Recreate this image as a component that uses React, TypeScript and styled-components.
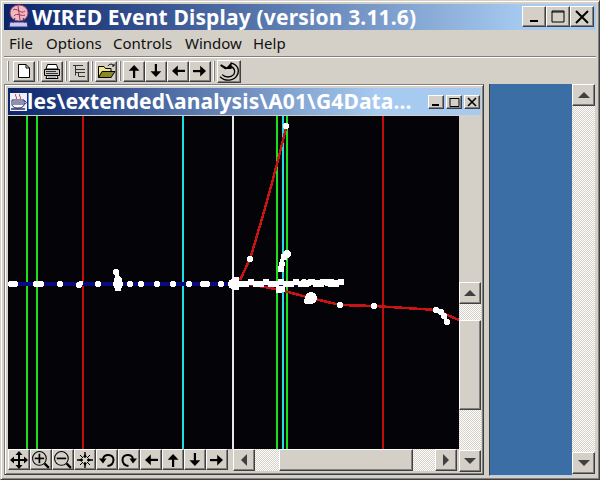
import React from "react";
import styled, { createGlobalStyle, css } from "styled-components";

const Global = createGlobalStyle`
  html, body { margin: 0; padding: 0; background: #d4d0c8; }
  #root { width: 600px; height: 480px; overflow: hidden; }
`;

const FACE = "#d4d0c8";
const bevel = css`
  background: ${FACE};
  box-sizing: border-box;
  border-style: solid;
  border-width: 1px;
  border-color: #fff #404040 #404040 #fff;
  box-shadow: inset -1px -1px 0 #808080;
`;
const hatch = css`
  background: repeating-conic-gradient(#d4d0c8 0 25%, #ffffff 0 50%) 0 0 / 2px 2px;
`;

const Window = styled.div`
  width: 600px;
  height: 480px;
  box-sizing: border-box;
  padding: 3px;
  background: ${FACE};
  border: 1px solid;
  border-color: #d4d0c8 #404040 #404040 #d4d0c8;
  box-shadow: inset 1px 1px 0 #fff, inset -1px -1px 0 #808080;
  display: flex;
  flex-direction: column;
  font-family: "Noto Sans", sans-serif;
`;
const TitleBar = styled.div<{ $small?: boolean }>`
  display: flex;
  align-items: center;
  flex: none;
  height: ${(p) => (p.$small ? 27 : 26)}px;
  background: linear-gradient(90deg, #0a246a 0%, #a6caf0 ${(p) => (p.$small ? 78 : 88)}%, #a6caf0 100%);
  padding: 0 ${(p) => (p.$small ? 1 : 2)}px 0 ${(p) => (p.$small ? 2 : 3)}px;
  svg { flex: none; }
`;
const TitleText = styled.div<{ $small?: boolean }>`
  flex: 1;
  min-width: 0;
  color: #fff;
  font-family: "Noto Sans", sans-serif;
  font-weight: 700;
  white-space: nowrap;
  font-size: 21px;
  letter-spacing: ${(p) => (p.$small ? 0.12 : 0.17)}px;
  margin-left: ${(p) => (p.$small ? 0 : 1)}px;
  line-height: 1;
`;
const CapButtons = styled.div<{ $small?: boolean }>`
  display: flex;
  gap: ${(p) => (p.$small ? 2 : 0)}px;
  margin-top: ${(p) => (p.$small ? 0 : -1)}px;
`;
const CapButton = styled.div<{ $small?: boolean }>`
  ${bevel};
  width: ${(p) => (p.$small ? 16 : 24)}px;
  height: ${(p) => (p.$small ? 14 : 21)}px;
  display: flex;
  align-items: center;
  justify-content: center;
  svg { display: block; }
`;
const MenuBar = styled.div`
  display: flex;
  align-items: center;
  flex: none;
  height: 26px;
  font-size: 15px;
  color: #111;
  border-bottom: 1px solid #808080;
  box-shadow: 0 1px 0 #fff;
`;
const MenuItem = styled.div<{ $w: number }>`
  width: ${(p) => p.$w}px;
  padding-left: 5px;
  box-sizing: border-box;
  white-space: nowrap;
`;
const ToolBar = styled.div`
  display: flex;
  align-items: center;
  flex: none;
  height: 26px;
  padding-left: 1px;
  margin-top: 1px;
`;
const Grip = styled.div`
  width: 0;
  height: 20px;
  border-left: 1px solid #fff;
  border-right: 1px solid #808080;
  margin: 0 2px;
  flex: none;
  &:first-child { margin-right: 4px; }
`;
const ToolButton = styled.div<{ $w?: number; $h?: number }>`
  ${bevel};
  width: ${(p) => p.$w ?? 22}px;
  height: ${(p) => p.$h ?? 21}px;
  flex: none;
  display: flex;
  align-items: center;
  justify-content: center;
  svg { display: block; flex: none; }
`;
const Desktop = styled.div`
  flex: 1;
  min-height: 0;
  display: flex;
  padding-right: 1px;
`;
const Frame = styled.div`
  ${bevel};
  width: 480px;
  flex: none;
  padding: 3px 2px 2px 3px;
  margin: 0 4px 1px 0;
  display: flex;
  flex-direction: column;
  border-top-color: #808080;
  border-left-color: #808080;
  box-shadow: inset 1px 1px 0 #fff, inset -1px -1px 0 #808080;
`;
const FrameBody = styled.div`
  flex: 1;
  min-height: 0;
  display: flex;
  margin-top: 1px;
`;
const ViewColumn = styled.div`
  width: 451px;
  flex: none;
  display: flex;
  flex-direction: column;
`;
const Canvas = styled.svg`
  display: block;
  width: 451px;
  height: 333px;
  flex: none;
  background: #030308;
`;
const BottomRow = styled.div`
  display: flex;
  flex: 1;
`;
const ButtonStrip = styled.div`
  display: flex;
  width: 225px;
  flex: none;
`;
const HScroll = styled.div`
  display: flex;
  width: 224px;
  height: 22px;
`;
const VScroll = styled.div<{ $top?: number; $bottom?: number; $w?: number }>`
  width: ${(p) => p.$w ?? 22}px;
  flex: none;
  display: flex;
  flex-direction: column;
  padding-top: ${(p) => p.$top ?? 0}px;
  padding-bottom: ${(p) => p.$bottom ?? 0}px;
`;
const ScrollButton = styled.div<{ $h?: number; $w?: number }>`
  ${bevel};
  width: ${(p) => p.$w ?? 22}px;
  height: ${(p) => p.$h ?? 22}px;
  flex: none;
  display: flex;
  align-items: center;
  justify-content: center;
  svg { display: block; }
`;
const Track = styled.div<{ $size?: number }>`
  ${hatch};
  flex: ${(p) => (p.$size ? `0 0 ${p.$size}px` : 1)};
`;
const Thumb = styled.div<{ $size: number }>`
  ${bevel};
  flex: 0 0 ${(p) => p.$size}px;
`;
const Blue = styled.div`
  flex: 1;
  background: #3a6ea5;
  margin-left: 1px;
  border-left: 1px solid #404040;
  border-bottom: 1px solid #b9cde4;
`;

const Tri = ({ d }: { d: "up" | "down" | "left" | "right" }) => {
  const pts = {
    up: "6,1 12,7 0,7",
    down: "0,1 12,1 6,7",
    left: "8,0 8,12 2,6",
    right: "2,0 2,12 8,6",
  }[d];
  const sq = d === "up" || d === "down";
  return (
    <svg width={sq ? 12 : 10} height={sq ? 8 : 12}>
      <polygon points={pts} fill="#404040" />
    </svg>
  );
};

const Arrow = ({ d }: { d: "up" | "down" | "left" | "right" }) => {
  const rot = { up: 0, right: 90, down: 180, left: 270 }[d];
  return (
    <svg width="14" height="14" viewBox="0 0 14 14">
      <g transform={`rotate(${rot} 7 7)`} fill="#000">
        <rect x="6" y="3" width="2.2" height="11" />
        <polygon points="7.1,1 12.5,6.8 1.7,6.8" />
      </g>
    </svg>
  );
};

const Stroke = { fill: "none", stroke: "#000", strokeWidth: 1 } as const;

const NewIcon = () => (
  <svg width="14" height="16" viewBox="0 0 14 16">
    <path d="M1.5 1.5H9L12.5 5V14.5H1.5Z" fill="#fff" stroke="#000" />
    <path d="M9 1.5V5H12.5" {...Stroke} />
  </svg>
);
const PrintIcon = () => (
  <svg width="18" height="17" viewBox="0 0 18 17">
    <path d="M4.5 1.5H13.5L15 6H3Z" fill="#fff" stroke="#000" />
    <path d="M1.5 6.5H16.5V12.5H1.5Z" fill="#c8c8c8" stroke="#000" />
    <path d="M3 8.5H13M3 10.5H15" stroke="#333" />
    <path d="M4 12.5H14L15 15.5H3Z" fill="#fff" stroke="#000" />
    <path d="M5 14H13" stroke="#666" />
  </svg>
);
const TreeIcon = () => (
  <svg width="15" height="16" viewBox="0 0 15 16">
    <path d="M1 2.5H11M3.5 2.5V12.5M3.5 6.5H13M3.5 9.5H13M6.5 9.5V13.5H13" stroke="#333" fill="none" />
  </svg>
);
const OpenIcon = () => (
  <svg width="19" height="16" viewBox="0 0 19 16">
    <path d="M1.5 3.5H7L8.5 5.5H14V14.5H1.5Z" fill="#f0e68c" stroke="#000" />
    <path d="M1.5 14.5L5 8.5H18L14 14.5Z" fill="#8a8a20" stroke="#000" />
    <path d="M11 3C12.5 0.5 15.5 0.5 17 3M17 3V0.8M17 3H15" stroke="#000" fill="none" />
  </svg>
);
const SpinIcon = () => (
  <svg width="22" height="21" viewBox="1 1 21 20">
    <path d="M13 3C20 4 22 10 19 15C16 20 8 21 3 16" fill="none" stroke="#000" strokeWidth="1.3" />
    <path d="M12 6C17 7 18 11 16 14C13 17 8 17 5 14" fill="none" stroke="#000" strokeWidth="1.3" />
    <path d="M8 9L3 5.5L4 4L10 7.5Z" fill="#000" />
    <path d="M8 8.5L14 2V8.5Z" fill="#000" />
  </svg>
);
const MoveIcon = () => (
  <svg width="18" height="18" viewBox="0 0 18 18" fill="#000">
    <rect x="8" y="3" width="2" height="12" />
    <rect x="3" y="8" width="12" height="2" />
    <polygon points="9,0 12.5,4 5.5,4" />
    <polygon points="9,18 12.5,14 5.5,14" />
    <polygon points="0,9 4,5.5 4,12.5" />
    <polygon points="18,9 14,5.5 14,12.5" />
  </svg>
);
const ZoomIcon = ({ plus }: { plus?: boolean }) => (
  <svg width="20" height="20" viewBox="0 0 19 19">
    <circle cx="8" cy="8" r="6.5" {...Stroke} />
    <path d="M3.5 8H12.5" stroke="#000" strokeWidth="1.6" />
    {plus && <path d="M8 3.5V12.5" stroke="#000" strokeWidth="1.6" />}
    <path d="M13 13L17 17" stroke="#000" strokeWidth="2.2" />
  </svg>
);
const PanIcon = () => (
  <svg width="16" height="16" viewBox="0 0 16 16" fill="#000">
    <path d="M8 0V6M8 10V16M0 8H6M10 8H16" stroke="#000" strokeWidth="1.4" />
    <path d="M3 3L6 6M13 3L10 6M3 13L6 10M13 13L10 10" stroke="#000" strokeWidth="1" />
    <polygon points="8,2 10,5 6,5" />
    <polygon points="8,14 10,11 6,11" />
    <polygon points="2,8 5,6 5,10" />
    <polygon points="14,8 11,6 11,10" />
  </svg>
);
const RotateIcon = ({ flip }: { flip?: boolean }) => (
  <svg width="16" height="16" viewBox="0 0 16 16" style={flip ? { transform: "scaleX(-1)" } : undefined}>
    <path d="M4 7C5 1.5 14 1.5 14.5 7.5C14.5 11 12 13.5 8.5 14" fill="none" stroke="#000" strokeWidth="2" />
    <polygon points="0,6.5 7.5,6.5 4,11.5" fill="#000" />
  </svg>
);
const DukeIcon = () => (
  <svg width="24" height="26" viewBox="0 0 24 26">
    <ellipse cx="12" cy="9" rx="9" ry="8" fill="#e9b9c4" stroke="#a04060" />
    <path d="M6 6C10 3 14 11 18 7M7 12C10 8 15 13 18 11M11 2L13 16" stroke="#b03050" fill="none" />
    <path d="M3 18H20L21 23H2Z" fill="#c8c8f0" stroke="#303070" />
    <path d="M8 14L6 19M16 14L18 19" stroke="#303070" />
  </svg>
);
const JavaIcon = () => (
  <svg width="17" height="18" viewBox="0 0 17 18">
    <rect x="0" y="0" width="17" height="18" fill="#eef0fa" />
    <path d="M6 1C4 3 8 4 6 6M10 1C8 3 12 4 10 6" stroke="#d02020" fill="none" />
    <path d="M2 7H14V11C14 14 11 15 8 15C5 15 2 14 2 11Z" fill="#fff" stroke="#202060" />
    <path d="M14 8C17 8 17 11 14 11M3 9H13M3 11H13" stroke="#202060" fill="none" />
    <path d="M1 16H15" stroke="#202060" strokeWidth="1.4" />
  </svg>
);

const band = Array.from({ length: 22 }, (_, i) => 236 + i * 5);
const band2 = Array.from({ length: 9 }, (_, i) => 304 + i * 4.6);

const dots: [number, number, number][] = [
  [11, 284, 3], [15, 284, 3.2], [38, 284, 3.3], [41, 284, 3], [36, 284, 3],
  [60, 284, 3.3], [79, 285, 3.3], [81, 283, 2.5], [98, 284, 3.3], [116, 272, 3], [117, 276, 2.5],
  [118, 284, 5], [118, 280, 4], [118, 288, 3.5], [130, 284, 3.3], [141, 284, 3.2],
  [157, 284, 3.2], [173, 284, 3.2], [189, 284, 3.2], [203, 284, 3.2], [207, 284, 3.2],
  [221, 284, 3.2], [233, 284, 5], [236, 280, 3.5], [236, 287, 3.5],
  [250, 259, 3], [286, 126, 3.3], [287, 254, 4], [284, 257, 3.5], [282, 264, 3], [281, 269, 3.5],
  [279, 290, 3.5], [282, 289, 3.5], [311, 298, 6], [307, 301, 3], [340, 305, 3.3], [374, 306, 3],
  [436, 310, 3.3], [441, 312, 3], [444, 316, 3], [447, 322, 3.3],
  ...band.map((x, i): [number, number, number] => [x, i % 3 === 0 ? 282 : 284, 3.5]),
  ...band2.map((x, i): [number, number, number] => [x, i % 2 === 0 ? 282 : 283, 3.2]),
];

const ChartView = () => (
  <Canvas viewBox="8 116 451 333">
    <g strokeWidth="2" shapeRendering="crispEdges">
      <path d="M27 116V449M37 116V449M277 116V449M287 116V449" stroke="#19e019" />
      <path d="M83 116V449M383 116V449" stroke="#c00d0d" />
      <path d="M183 116V449M283 116V449" stroke="#1fe0e0" />
      <path d="M233 116V449" stroke="#e8e8e8" />
    </g>
    <path d="M8 284H300" stroke="#0a0a80" strokeWidth="4" shapeRendering="crispEdges" />
    <g shapeRendering="crispEdges">
      <path d="M240 280L250 259C262 220 276 170 287 124" stroke="#c81414" strokeWidth="2.5" fill="none" />
      <path d="M233 281L280 290L311 298L340 305L375 306L436 310L459 320" stroke="#c81414" strokeWidth="2.5" fill="none" />
      {dots.map(([x, y, r], i) => (
        <circle key={i} cx={x} cy={y} r={r} fill="#fff" />
      ))}
      <path d="M283 256L281 270M443 314L447 322" stroke="#fff" strokeWidth="4" />
    </g>
  </Canvas>
);

export default function App() {
  return (
    <Window>
      <Global />
      <TitleBar>
        <DukeIcon />
        <TitleText>WIRED Event Display (version 3.11.6)</TitleText>
        <CapButtons>
          <CapButton>
            <svg width="12" height="12"><rect x="2" y="9" width="8" height="2" fill="#000" /></svg>
          </CapButton>
          <CapButton>
            <svg width="14" height="13"><path d="M1 2H13V12H1Z M1 2V1H13V2" fill="none" stroke="#000" /></svg>
          </CapButton>
          <CapButton>
            <svg width="14" height="14"><path d="M1 1L13 13M13 1L1 13" stroke="#000" strokeWidth="2" /></svg>
          </CapButton>
        </CapButtons>
      </TitleBar>
      <MenuBar>
        <MenuItem $w={37}>File</MenuItem>
        <MenuItem $w={67}>Options</MenuItem>
        <MenuItem $w={72}>Controls</MenuItem>
        <MenuItem $w={68}>Window</MenuItem>
        <MenuItem $w={50}>Help</MenuItem>
      </MenuBar>
      <ToolBar>
        <Grip />
        <ToolButton><NewIcon /></ToolButton>
        <Grip />
        <ToolButton><PrintIcon /></ToolButton>
        <Grip />
        <ToolButton $w={20}><TreeIcon /></ToolButton>
        <Grip />
        <ToolButton><OpenIcon /></ToolButton>
        <Grip />
        <ToolButton><Arrow d="up" /></ToolButton>
        <ToolButton><Arrow d="down" /></ToolButton>
        <ToolButton><Arrow d="left" /></ToolButton>
        <ToolButton><Arrow d="right" /></ToolButton>
        <Grip />
        <ToolButton $w={24} $h={23}><SpinIcon /></ToolButton>
      </ToolBar>
      <Desktop>
        <Frame>
          <TitleBar $small>
            <JavaIcon />
            <TitleText $small>les\extended\analysis\A01\G4Data...</TitleText>
            <CapButtons $small>
              <CapButton $small>
                <svg width="10" height="10"><rect x="1" y="7" width="7" height="2" fill="#000" /></svg>
              </CapButton>
              <CapButton $small>
                <svg width="11" height="10"><path d="M1 1.5H10V9.5H1Z M1 1V2" fill="none" stroke="#000" /></svg>
              </CapButton>
              <CapButton $small>
                <svg width="10" height="10"><path d="M1 1L9 9M9 1L1 9" stroke="#000" strokeWidth="1.6" /></svg>
              </CapButton>
            </CapButtons>
          </TitleBar>
          <FrameBody>
            <ViewColumn>
              <ChartView />
              <BottomRow>
                <ButtonStrip>
                  <ToolButton><MoveIcon /></ToolButton>
                  <ToolButton><ZoomIcon plus /></ToolButton>
                  <ToolButton><ZoomIcon /></ToolButton>
                  <ToolButton><PanIcon /></ToolButton>
                  <ToolButton><RotateIcon /></ToolButton>
                  <ToolButton><RotateIcon flip /></ToolButton>
                  <ToolButton><Arrow d="left" /></ToolButton>
                  <ToolButton><Arrow d="up" /></ToolButton>
                  <ToolButton><Arrow d="down" /></ToolButton>
                  <ToolButton><Arrow d="right" /></ToolButton>
                </ButtonStrip>
                <HScroll>
                  <ScrollButton><Tri d="left" /></ScrollButton>
                  <Track $size={24} />
                  <Thumb $size={134} />
                  <Track />
                  <ScrollButton><Tri d="right" /></ScrollButton>
                </HScroll>
              </BottomRow>
            </ViewColumn>
            <VScroll $top={166}>
              <ScrollButton><Tri d="up" /></ScrollButton>
              <Track $size={16} />
              <Thumb $size={90} />
              <Track />
              <ScrollButton><Tri d="down" /></ScrollButton>
            </VScroll>
          </FrameBody>
        </Frame>
        <Blue />
        <VScroll $w={23} $bottom={2}>
          <ScrollButton $w={23}><Tri d="up" /></ScrollButton>
          <Track />
          <ScrollButton $w={23}><Tri d="down" /></ScrollButton>
        </VScroll>
      </Desktop>
    </Window>
  );
}
